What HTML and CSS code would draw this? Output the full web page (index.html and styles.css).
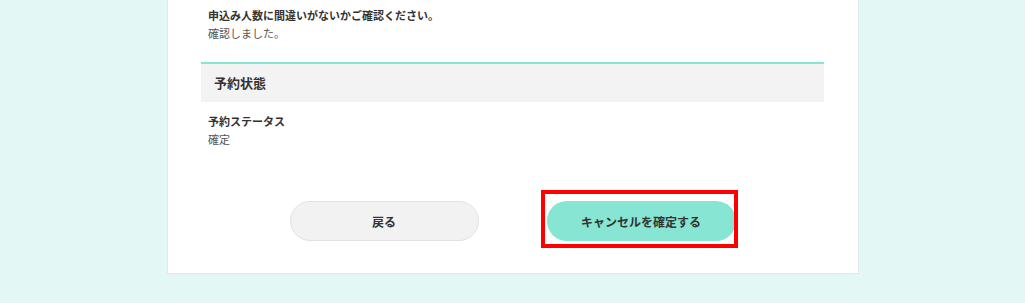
FILE: index.html
```html
<!DOCTYPE html>
<html lang="ja">
<head>
<meta charset="utf-8">
<link rel="stylesheet" href="styles.css">
</head>
<body>
<div class="card">
  <div class="item">
    <div class="label">申込み人数に間違いがないかご確認ください。</div>
    <div class="value">確認しました。</div>
  </div>
  <div class="section-head">予約状態</div>
  <div class="item item-status">
    <div class="label">予約ステータス</div>
    <div class="value">確定</div>
  </div>
  <div class="actions">
    <button class="btn btn-back">戻る</button>
    <div class="btn-wrap">
      <button class="btn btn-primary">キャンセルを確定する</button>
      <div class="highlight"></div>
    </div>
  </div>
</div>
</body>
</html>
```
FILE: styles.css
```css
* { box-sizing: border-box; }
html, body { margin: 0; padding: 0; }
body {
  background: #e3f7f5;
  font-family: "Noto Sans CJK JP", "Noto Sans", sans-serif;
  color: #333;
  height: 303px;
  overflow: hidden;
}
.card {
  margin-left: 167px;
  width: 692px;
  background: #fff;
  border: 1px solid #e6e6e6;
  border-top: none;
  padding: 6px 34px 32px 33px;
}
.item { padding-left: 7px; }
.label {
  font-size: 11px;
  font-weight: 700;
  line-height: 18px;
  color: #333;
}
.value {
  font-size: 11px;
  line-height: 18px;
  color: #555;
}
.section-head {
  margin-top: 20px;
  border-top: 2px solid #86e5d3;
  background: #f3f3f3;
  height: 40px;
  padding-left: 13px;
  font-size: 13px;
  font-weight: 700;
  line-height: 37px;
  color: #333;
}
.item-status { margin-top: 10px; }
.item-status .value { line-height: 19px; }
.actions {
  margin-top: 52px;
  display: flex;
  justify-content: center;
  gap: 68px;
}
.btn {
  width: 189px;
  height: 40px;
  border-radius: 20px;
  font-family: inherit;
  font-size: 12px;
  font-weight: 700;
  color: #333;
  cursor: pointer;
  padding: 0;
}
.btn-back {
  background: #f2f2f2;
  border: 1px solid #e2e2e2;
}
.btn-primary {
  background: #86e5d3;
  border: none;
}
.btn-wrap { position: relative; }
.highlight {
  position: absolute;
  left: -6px;
  top: -11px;
  width: 197px;
  height: 58px;
  border: 4px solid #f00;
  pointer-events: none;
}
```
